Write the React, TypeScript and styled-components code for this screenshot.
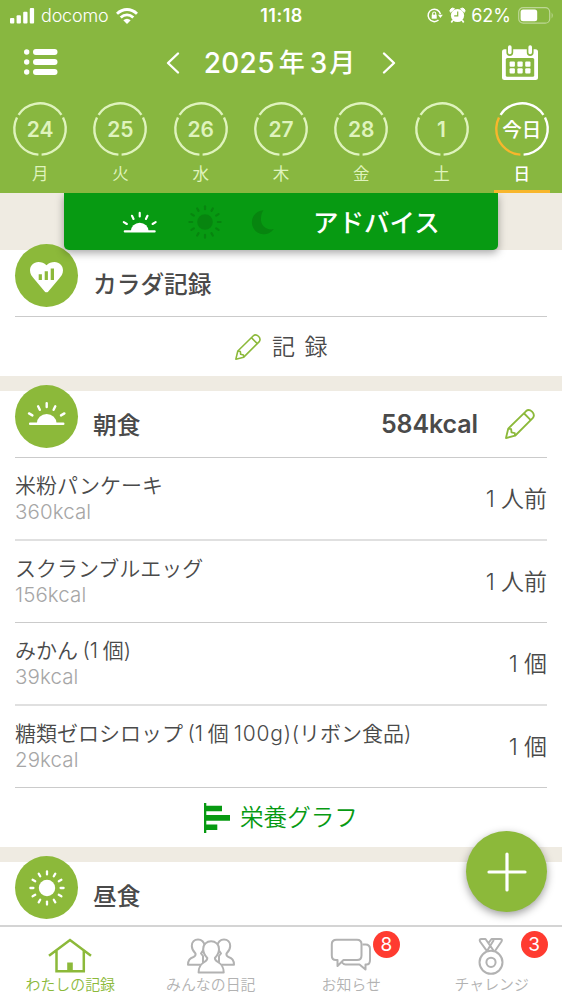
import React from 'react';
import styled, { createGlobalStyle } from 'styled-components';

const GREEN = '#8cb93a';
const DEEP = '#079a12';
const SHADE = '#07850f';
const INK = '#4a4a4a';
const PALE = '#dff3bd';
const MUTED = '#b2b2b2';

const GlobalStyle = createGlobalStyle`
  * { box-sizing: border-box; }
  body {
    margin: 0;
    background: #fff;
    color: ${INK};
    font-family: Inter, "Noto Sans CJK JP", sans-serif;
  }
  svg { display: block; flex: none; overflow: visible; }
`;

const Screen = styled.div`
  position: relative;
  width: 562px;
  height: 1000px;
  overflow: hidden;
  display: flex;
  flex-direction: column;
  background: #fff;
`;

const Header = styled.header`
  position: relative;
  z-index: 2;
  flex: none;
  height: 193px;
  background: #88b740;
  color: #fff;
`;

const StatusBar = styled.div`
  display: grid;
  grid-template-columns: 1fr auto 1fr;
  align-items: center;
  height: 30px;
  padding: 0 9px 0 10px;
  line-height: 30px;
`;

const StatusGroup = styled.div<{ $end?: boolean }>`
  display: flex;
  align-items: center;
  justify-content: ${p => (p.$end ? 'flex-end' : 'flex-start')};
  height: 30px;
`;

const Carrier = styled.span`
  margin: 1px 8px 0 7px;
  font-size: 18px;
  font-weight: 350;
  letter-spacing: -0.2px;
`;

const Clock = styled.span`
  margin-top: 1px;
  font-size: 18px;
  font-weight: 600;
  letter-spacing: 0.5px;
`;

const Percent = styled.span`
  margin: 1px 7px 0 6px;
  font-size: 18px;
  font-weight: 400;
`;

const AlarmSlot = styled.span`
  margin-left: 7px;
`;

const TitleBar = styled.div`
  display: flex;
  align-items: center;
  justify-content: space-between;
  height: 64px;
  padding: 0 24px 0 24px;
`;

const MonthPicker = styled.div`
  display: flex;
  align-items: center;
  margin: 2px 0 0 2px;
`;

const Month = styled.h1`
  display: flex;
  margin: 0 28px 0 25px;
  font-size: 28px;
  line-height: 40px;
  font-weight: 450;
  white-space: nowrap;
`;

const MonthPart = styled.span<{ $gap?: number; $track?: number; $size?: number }>`
  margin-left: ${p => p.$gap ?? 0}px;
  letter-spacing: ${p => p.$track ?? 0}px;
  font-size: ${p => p.$size ?? 28}px;
`;

const Week = styled.div`
  display: grid;
  grid-template-columns: repeat(7, 1fr);
  height: 99px;
  padding-top: 8px;
`;

const Day = styled.div<{ $today?: boolean }>`
  display: flex;
  flex-direction: column;
  align-items: center;
  height: 91px;
  color: ${p => (p.$today ? '#fff' : PALE)};
`;

const DayCircle = styled.div`
  display: grid;
  place-items: center;
  width: 54px;
  height: 54px;
  > * { grid-area: 1 / 1; }
`;

const DayNumber = styled.span<{ $today?: boolean }>`
  margin-top: 1px;
  font-size: ${p => (p.$today ? 19.5 : 21)}px;
  line-height: 28px;
  font-weight: ${p => (p.$today ? 500 : 600)};
  white-space: nowrap;
`;

const Weekday = styled.span<{ $today?: boolean }>`
  margin-top: 7px;
  font-size: 16.5px;
  line-height: 22px;
  font-weight: ${p => (p.$today ? 500 : 400)};
`;

const TodayBar = styled.i`
  width: 56px;
  height: 3px;
  margin-top: auto;
  background: #f8b62c;
`;

const Advice = styled.div`
  position: absolute;
  left: 64px;
  top: 193px;
  width: 434px;
  height: 57px;
  display: flex;
  align-items: center;
  padding-left: 59px;
  background: ${DEEP};
  border-radius: 0 0 5px 5px;
  box-shadow: 0 3px 8px rgba(0, 0, 0, 0.35);
  clip-path: inset(0 -20px -20px -20px);
  color: #fff;
`;

const AdviceIcons = styled.div`
  display: flex;
  align-items: center;
  gap: 30px;
  margin-left: -1px;
`;

const AdviceLabel = styled.span`
  margin: 3px 0 0 39px;
  font-size: 25.5px;
  line-height: 36px;
  font-weight: 500;
`;

const Main = styled.main`
  flex: 1;
  min-height: 0;
  overflow: hidden;
  padding-top: 57px;
  background: #efebe2;
`;

const Card = styled.section<{ $height: number }>`
  height: ${p => p.$height}px;
  margin-bottom: 15px;
  padding: 0 15px;
  background: #fff;
`;

const CardHead = styled.div`
  display: flex;
  align-items: flex-start;
  height: 67px;
  border-bottom: 1px solid #cbcbcb;
`;

const Medallion = styled.div<{ $shift?: number }>`
  display: grid;
  place-items: center;
  width: 63px;
  height: 63px;
  margin-top: -6px;
  border-radius: 50%;
  background: ${GREEN};
  > svg { margin-top: ${p => p.$shift ?? 0}px; }
`;

const CardTitle = styled.h2`
  margin: 18px auto 0 15px;
  font-size: 23.7px;
  line-height: 34px;
  font-weight: 500;
`;

const Total = styled.span`
  margin: 16px 27px 0 0;
  font-size: 25px;
  line-height: 34px;
  font-weight: 600;
  letter-spacing: -0.1px;
`;

const EditSlot = styled.div`
  margin: 18px 12px 0 0;
`;

const Action = styled.div<{ $graph?: boolean }>`
  display: flex;
  align-items: center;
  height: 59px;
  padding-left: ${p => (p.$graph ? 189 : 220)}px;
  color: ${p => (p.$graph ? DEEP : INK)};
`;

const ActionLabel = styled.span<{ $graph?: boolean }>`
  margin-left: ${p => (p.$graph ? 10 : 11)}px;
  font-size: ${p => (p.$graph ? 23.6 : 23)}px;
  line-height: 34px;
  font-weight: 350;
  word-spacing: 3px;
`;

const Food = styled.div<{ $soft?: boolean }>`
  display: flex;
  align-items: center;
  justify-content: space-between;
  height: ${p => (p.$soft ? 83 : 82)}px;
  border-bottom: ${p => (p.$soft ? '2px solid #e0e0e0' : '1px solid #cbcbcb')};
`;

const FoodName = styled.div`
  font-size: 21px;
  line-height: 28px;
  font-weight: 350;
  white-space: nowrap;
  word-spacing: -1.5px;
`;

const Energy = styled.div`
  margin-top: -2px;
  font-size: 20.5px;
  line-height: 27px;
  font-weight: 350;
  letter-spacing: 0.1px;
  color: #a6a6a6;
`;

const Amount = styled.span`
  font-size: 23px;
  line-height: 34px;
  font-weight: 350;
`;

const Run = styled.span<{ $gap: number; $wide: boolean }>`
  margin-left: ${p => p.$gap}em;
  letter-spacing: ${p => (p.$wide ? 0.8 : 0)}px;
`;

const AddButton = styled.button`
  position: absolute;
  z-index: 3;
  left: 466px;
  top: 831px;
  width: 81px;
  height: 81px;
  padding: 0;
  display: grid;
  place-items: center;
  border: 0;
  border-radius: 50%;
  background: ${GREEN};
  box-shadow: 0 3px 8px rgba(0, 0, 0, 0.38);
`;

const TabBar = styled.nav`
  flex: none;
  display: grid;
  grid-template-columns: repeat(4, 1fr);
  height: 75px;
  border-top: 2px solid #d4d4d4;
  background: #fff;
`;

const Tab = styled.div<{ $active?: boolean }>`
  position: relative;
  display: flex;
  flex-direction: column;
  align-items: center;
  padding-top: 11px;
  color: ${p => (p.$active ? GREEN : MUTED)};
`;

const TabLabel = styled.span`
  margin-top: auto;
  margin-bottom: 6px;
  font-size: 14.9px;
  line-height: 20px;
  font-weight: 350;
  white-space: nowrap;
`;

const Badge = styled.span<{ $left: number }>`
  position: absolute;
  left: ${p => p.$left}px;
  top: 4px;
  width: 27px;
  height: 27px;
  border-radius: 50%;
  background: #ff3b30;
  color: #fff;
  text-align: center;
  font-size: 19px;
  line-height: 27px;
`;

const Ring = ({ today }: { today?: boolean }) => (
  <svg width="54" height="54" viewBox="0 0 54 54" fill="none" strokeWidth="2.4">
    {[0, 1, 2].map(i => (
      <circle
        key={i}
        cx="27"
        cy="27"
        r="25.7"
        pathLength={360}
        strokeDasharray="113 247"
        stroke={today ? (i === 0 ? '#f8b62c' : '#fff') : PALE}
        transform={`rotate(${93.5 + i * 120} 27 27)`}
      />
    ))}
  </svg>
);

const Sunrise = ({ width }: { width: number }) => (
  <svg width={width} height={(width * 24) / 40} viewBox="0.5 0 40 24" fill="none" stroke="#fff" strokeWidth="2.4" strokeLinecap="round">
    <path d="M3.6 22.7H36.8M20.2 2.1V6M11.6 5.3l1.7 3.5M28.8 5.3l-1.7 3.5M2.5 12.4l3.4 2M37.9 12.4l-3.4 2" />
    <path d="M10.3 22.5a9.9 9.5 0 0 1 19.8 0z" fill="#fff" stroke="none" />
  </svg>
);

const Sun = ({ size, color }: { size: number; color: string }) => (
  <svg width={size} height={size} viewBox="-18 -18 36 36" stroke={color} strokeWidth="2.3" strokeLinecap="round">
    <circle r="8.2" fill={color} stroke="none" />
    {Array.from({ length: 12 }, (_, i) => (
      <path key={i} d="M0-13.6V-16.6" transform={`rotate(${i * 30})`} />
    ))}
  </svg>
);

const Moon = () => (
  <svg width="22" height="24" viewBox="0 0 22 24">
    <path d="M11.5.3A12 12 0 1 0 21.8 19C16.5 20.5 9.5 17.5 9 10.5 8.7 6.5 9.5 3 11.5.3z" fill={SHADE} />
  </svg>
);

const Heart = () => (
  <svg width="33" height="31" viewBox="0 0 33 31">
    <path d="M16.5 3.2C18.8.8 21.5 0 24.5 0 29.5 0 33 3.8 33 8.3c0 3.500-1.700 6-4 8.500L18.300 29.500q-1.800 1.700-3.600 0L4 16.800C1.700 14.300 0 11.800 0 8.300 0 3.800 3.500 0 8.500 0 11.500 0 14.200.8 16.500 3.200z" fill="#fff" />
    <path d="M8.700 12.300h3.200V18H8.700zM14.700 9.300h3.200V18h-3.200zM20.700 6.600h3.300V18h-3.300z" fill={GREEN} />
  </svg>
);

const Pencil = ({ size }: { size: number }) => (
  <svg width={size} height={size} viewBox="0 0 92 92" fill="none" stroke={GREEN} strokeWidth="5.6" strokeLinejoin="round">
    <path d="M3 89L10 60 64 7Q73-1 83 8 93 18 85 28L31 82z" />
    <path d="M10 60l9 2 1 10 10 2 1 8M58 13l21 21" />
  </svg>
);

const Signal = () => (
  <svg width="24" height="16" viewBox="0 0 24 16" fill="#fff">
    <rect x="0" y="10" width="4.3" height="5.5" rx="1" />
    <rect x="6.6" y="7.3" width="4.3" height="8.2" rx="1" />
    <rect x="13.2" y="3.7" width="4.3" height="11.8" rx="1" />
    <rect x="19.8" y="0" width="4.3" height="15.5" rx="1" />
  </svg>
);

const Wifi = () => (
  <svg width="22" height="16" viewBox="0 0 22 16" fill="none" stroke="#fff" strokeWidth="2.9">
    <path d="M1 5.700Q5.500 1.500 11 1.500T21 5.700M4.700 9.500Q7.500 6.900 11 6.900T17.300 9.500" />
    <path d="M7.300 12.300Q11 9.300 14.700 12.300L11 16z" fill="#fff" stroke="none" />
  </svg>
);

const RotationLock = () => (
  <svg width="16" height="15" viewBox="0 0 16 15" fill="none" stroke="#fff" strokeWidth="1.5">
    <path d="M13.400 6.200A6.200 6.200 0 1 0 11.500 12" />
    <path d="M11 6.700h4.800L13.400 9.900z" fill="#fff" stroke="none" />
    <rect x="4.7" y="6.7" width="5" height="4" fill="#fff" stroke="none" />
    <path d="M5.700 7V5.500a1.500 1.500 0 0 1 3 0V7" strokeWidth="1.1" />
  </svg>
);

const Alarm = () => (
  <svg width="15" height="15" viewBox="0 0 15 15">
    <path d="M.4 4.200A2.700 2.700 0 0 1 4.500.8zM14.600 4.200A2.700 2.700 0 0 0 10.500.8z" fill="#fff" stroke="#fff" />
    <circle cx="7.5" cy="7.5" r="6.6" fill="#fff" />
    <path d="M2.800 12.200L1.300 14.400M12.200 12.200l1.500 2.200" stroke="#fff" strokeWidth="1.7" />
    <path d="M7.700 3.500v4.300H4.200" fill="none" stroke="#88b740" strokeWidth="1.2" />
  </svg>
);

const Battery = () => (
  <svg width="35" height="17" viewBox="0 0 35 17">
    <rect x=".7" y=".7" width="31" height="15.5" rx="4.5" fill="none" stroke="#fff" strokeOpacity=".45" strokeWidth="1.2" />
    <rect x="2.6" y="2.6" width="16.6" height="11.7" rx="2.5" fill="#fff" />
    <path d="M33.700 5.500q1.900 3 0 6z" fill="#fff" fillOpacity=".5" />
  </svg>
);

const Menu = () => (
  <svg width="34" height="26" viewBox="0 0 34 26" fill="#fff">
    {[3, 13, 23].map(y => (
      <React.Fragment key={y}>
        <circle cx="2.7" cy={y} r="2.7" />
        <rect x="9" y={y - 2.9} width="24.5" height="5.8" rx="2.9" />
      </React.Fragment>
    ))}
  </svg>
);

const Chevron = ({ right }: { right?: boolean }) => (
  <svg width="12" height="20" viewBox="0 0 12 20" fill="none" stroke="#fff" strokeWidth="2.4" strokeLinecap="round" strokeLinejoin="round">
    <path d={right ? 'M1 .5L11 10 1 19.5' : 'M11 .5L1 10 11 19.5'} />
  </svg>
);

const Calendar = () => (
  <svg width="36" height="35" viewBox="0 0 36 35">
    <rect x="0" y="4.3" width="36" height="30.7" rx="2.5" fill="#fff" />
    <path d="M7.800 2v5.500M28.200 2v5.500" stroke="#88b740" strokeWidth="6.8" strokeLinecap="round" />
    <path d="M7.800 2v5.500M28.200 2v5.500" stroke="#fff" strokeWidth="3.6" strokeLinecap="round" />
    <rect x="3.8" y="13" width="28.4" height="18.7" rx="1.5" fill="#88b740" />
    {[0, 1, 2].map(c => [0, 1].map(r => (
      <rect key={`${c}${r}`} x={7.6 + c * 7.8} y={16.5 + r * 6.7} width="5.3" height="5.2" rx="1" fill="#fff" />
    )))}
  </svg>
);

const BarChart = () => (
  <svg width="26" height="30" viewBox="0 0 26 30" fill={DEEP}>
    <path d="M0 0H2.300V30H0zM0 2.800H18V8.300H0zM0 12H26V17.700H0zM0 21.500H13.300V27H0z" />
  </svg>
);

const House = () => (
  <svg width="44" height="36" viewBox="0 0 44 36" fill="none" stroke="currentColor" strokeWidth="2.5">
    <path d="M1 17.700L22 2 43 17.700M8.500 13v20.300H35.800V13" />
    <path d="M19.200 24.500h5.600v8.800h-5.600z" fill="currentColor" stroke="none" />
  </svg>
);

const People = () => (
  <svg width="48" height="36" viewBox="0 0 48 36" fill="#fff" stroke="currentColor" strokeWidth="2" strokeLinejoin="round">
    <path d="M8.500 15.500Q4.800 12 4.800 8C4.800 4 7.500 1.500 11 1.500S17.500 4 17.500 8Q17.500 12 14 15.500L16 18v8.800H1Q1 20.500 6.500 19 9 18 8.500 15.500z" />
    <path d="M39.500 15.500Q43.200 12 43.200 8C43.200 4 40.500 1.500 37 1.500S30.500 4 30.500 8Q30.500 12 34 15.500L32 18v8.800H47Q47 20.500 41.500 19 39 18 39.500 15.500z" />
    <path d="M20.300 20Q16.200 16 16.200 11C16.200 6.300 19.800 3.300 24.100 3.300S32 6.300 32 11Q32 16 27.900 20C27.500 25 36.700 23 36.700 34.400H11.600C11.600 23 20.700 25 20.300 20z" />
  </svg>
);

const Chat = () => (
  <svg width="41" height="36" viewBox="0 0 41 36" fill="none" stroke="currentColor" strokeWidth="2" strokeLinejoin="round">
    <path d="M31.500 6.500H34.500Q39 6.500 39 11V22Q39 26.500 35.500 26.500H34.500V31.500L28.500 26.500H14.500Q12.500 26.500 10.500 24" />
    <path d="M5.500 1.700H26Q30.500 1.700 30.500 6.200V17.500Q30.500 22 26 22H12.500L6.500 28V22H5Q.8 22 .8 17.500V6.200Q.8 1.700 5.500 1.700z" />
  </svg>
);

const Medal = () => (
  <svg width="28" height="37" viewBox="0 0 28 37" fill="none" stroke="currentColor" strokeWidth="2" strokeLinejoin="round">
    <path d="M9 13.200L2 3.500Q1 1 3.500 1H7.500L15.500 12.500M10.500 5L13.500 1H22Q24.800 1 23.500 3.500L16.800 13.200M15.800 2L9.300 12.500" />
    <circle cx="13" cy="24.3" r="11.5" />
    <circle cx="13" cy="24.3" r="4.6" />
  </svg>
);

const Plus = () => (
  <svg width="40" height="40" viewBox="0 0 40 40" stroke="#fff" strokeWidth="3.2" strokeLinecap="round">
    <path d="M20 2v36M2 20h36" />
  </svg>
);

/* Adds the small gap that sets digits apart from neighbouring kanji. */
const Spaced = ({ text, gap }: { text: string; gap: number }) => (
  <>
    {text.split(/(?<=[0-9])(?=[人個])|(?<=個)(?=[0-9])|(?<=\))(?=\()/).map((part, i) => (
      <Run key={i} $gap={i && part[0] !== '(' ? gap : 0} $wide={/^\d+g/.test(part)}>{part}</Run>
    ))}
  </>
);

const days = [
  ['24', '月'], ['25', '火'], ['26', '水'], ['27', '木'], ['28', '金'], ['1', '土'], ['今日', '日'],
];

const foods = [
  { name: '米粉パンケーキ', energy: '360kcal', amount: '1人前' },
  { name: 'スクランブルエッグ', energy: '156kcal', amount: '1人前' },
  { name: 'みかん (1個)', energy: '39kcal', amount: '1個' },
  { name: '糖類ゼロシロップ (1個100g)(リボン食品)', energy: '29kcal', amount: '1個' },
];

export default function App() {
  return (
    <Screen>
      <GlobalStyle />
      <Header>
        <StatusBar>
          <StatusGroup>
            <Signal />
            <Carrier>docomo</Carrier>
            <Wifi />
          </StatusGroup>
          <Clock>11:18</Clock>
          <StatusGroup $end>
            <RotationLock />
            <AlarmSlot><Alarm /></AlarmSlot>
            <Percent>62%</Percent>
            <Battery />
          </StatusGroup>
        </StatusBar>
        <TitleBar>
          <Menu />
          <MonthPicker>
            <Chevron />
            <Month>
              <MonthPart $track={0.3}>2025</MonthPart>
              <MonthPart $gap={4} $size={26}>年</MonthPart>
              <MonthPart $gap={5}>3</MonthPart>
              <MonthPart $gap={2} $size={26}>月</MonthPart>
            </Month>
            <Chevron right />
          </MonthPicker>
          <Calendar />
        </TitleBar>
        <Week>
          {days.map(([date, weekday], i) => (
            <Day key={date} $today={i === 6}>
              <DayCircle>
                <Ring today={i === 6} />
                <DayNumber $today={i === 6}>{date}</DayNumber>
              </DayCircle>
              <Weekday $today={i === 6}>{weekday}</Weekday>
              {i === 6 && <TodayBar />}
            </Day>
          ))}
        </Week>
        <Advice>
          <AdviceIcons>
            <Sunrise width={36} />
            <Sun size={34} color={SHADE} />
            <Moon />
          </AdviceIcons>
          <AdviceLabel>アドバイス</AdviceLabel>
        </Advice>
      </Header>

      <Main>
        <Card $height={126}>
          <CardHead>
            <Medallion $shift={3}><Heart /></Medallion>
            <CardTitle>カラダ記録</CardTitle>
          </CardHead>
          <Action>
            <Pencil size={26} />
            <ActionLabel>記 録</ActionLabel>
          </Action>
        </Card>

        <Card $height={456}>
          <CardHead>
            <Medallion $shift={-7}><Sunrise width={40} /></Medallion>
            <CardTitle>朝食</CardTitle>
            <Total>584kcal</Total>
            <EditSlot><Pencil size={30} /></EditSlot>
          </CardHead>
          {foods.map((food, i) => (
            <Food key={food.name} $soft={i % 2 === 0}>
              <div>
                <FoodName><Spaced text={food.name} gap={0.23} /></FoodName>
                <Energy>{food.energy}</Energy>
              </div>
              <Amount><Spaced text={food.amount} gap={0.27} /></Amount>
            </Food>
          ))}
          <Action $graph>
            <BarChart />
            <ActionLabel $graph>栄養グラフ</ActionLabel>
          </Action>
        </Card>

        <Card $height={80}>
          <CardHead>
            <Medallion><Sun size={36} color="#fff" /></Medallion>
            <CardTitle>昼食</CardTitle>
          </CardHead>
        </Card>
      </Main>

      <AddButton aria-label="追加"><Plus /></AddButton>

      <TabBar>
        <Tab $active><House /><TabLabel>わたしの記録</TabLabel></Tab>
        <Tab><People /><TabLabel>みんなの日記</TabLabel></Tab>
        <Tab><Chat /><TabLabel>お知らせ</TabLabel><Badge $left={92}>8</Badge></Tab>
        <Tab><Medal /><TabLabel>チャレンジ</TabLabel><Badge $left={99}>3</Badge></Tab>
      </TabBar>
    </Screen>
  );
}
